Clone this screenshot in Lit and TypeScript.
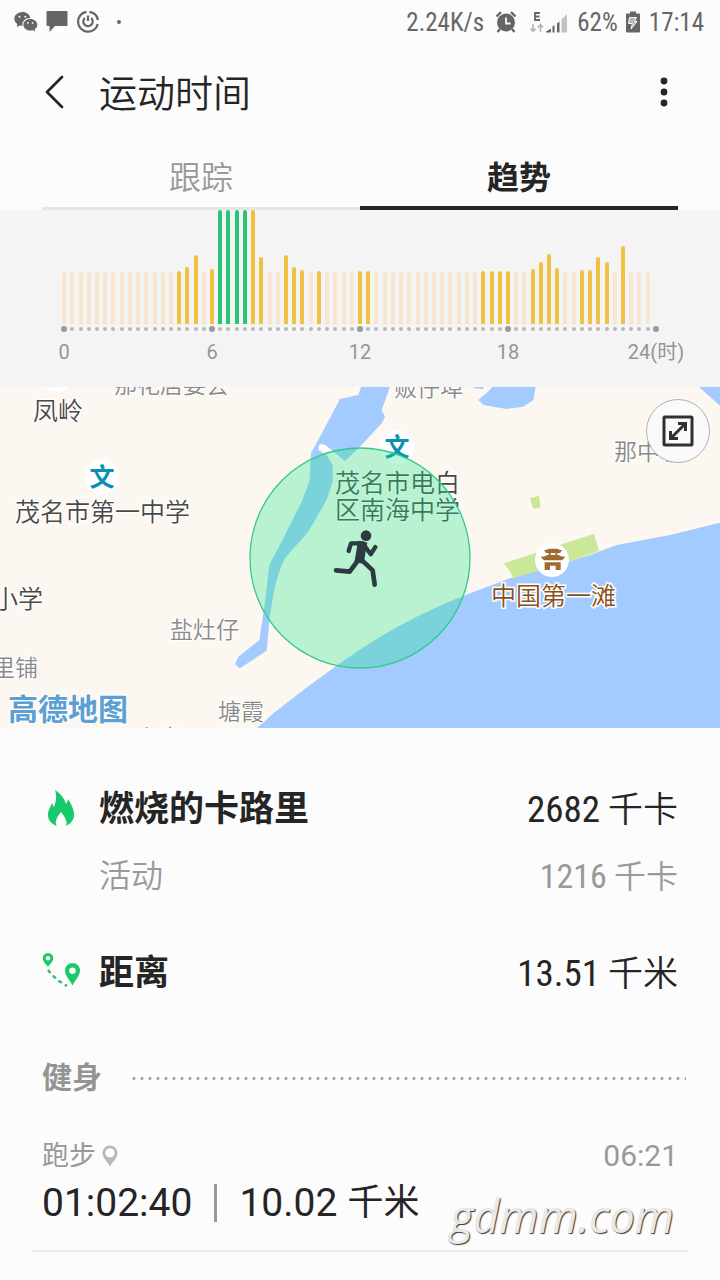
import { LitElement, html, svg, css } from "lit";
import { customElement } from "lit/decorators.js";
import { classMap } from "lit/directives/class-map.js";
import { styleMap } from "lit/directives/style-map.js";

const REST = 52;
const SLOTS_PER_HOUR = 3;
const SLOT_COUNT = 24 * SLOTS_PER_HOUR;

/** Active slots of the day: slot index -> bar height. */
const ACTIVE: Record<number, number> = {
  14: 53, 15: 57, 16: 69, 18: 55, 19: 114, 20: 114, 21: 114, 22: 114, 23: 114,
  24: 67, 27: 69, 28: 57, 29: 54, 31: 53, 36: 53, 37: 53, 51: 53, 52: 53,
  53: 53, 54: 53, 57: 55, 58: 62, 59: 70, 60: 56, 63: 54, 64: 54, 65: 67,
  66: 62, 68: 78,
};
const WORKOUT = new Set([19, 20, 21, 22]);

@customElement("status-bar")
export class StatusBar extends LitElement {
  static styles = css`
    :host {
      display: flex;
      align-items: center;
      justify-content: space-between;
      height: 46px;
      padding: 0 16px 0 14px;
      color: #666;
      font: 25px/30px "Roboto Condensed", Roboto, sans-serif;
    }
    .side { display: flex; align-items: center; }
    .notices { gap: 8px; }
    .last { margin-left: 3px; }
    .speed { margin-right: 11px; }
    .signal { margin: 0 8px 0 12px; }
    .battery { margin: 0 8px 0 7px; }
    svg { display: block; }
  `;
  render() {
    return html`
      <div class="side notices">
        <svg width="24" height="24" viewBox="0 0 24 24" fill="#666">
          <path d="M8.500 1C4 1 .3 4 .3 7.700c0 2.100 1.200 4 3 5.200L2.800 16l3-1.600c.9.200 1.700.300 2.700.300-.8-4.500 3-8 7.800-7.800C15.700 3.500 12.500 1 8.500 1z"/>
          <path d="M16.300 7.900c-4 0-6.900 2.500-6.900 5.800s3 5.800 6.900 5.800c.9 0 1.700-.100 2.400-.300l2.500 1.300-.6-2.200c1.600-1 2.700-2.700 2.700-4.600 0-3.300-3.100-5.800-7-5.800z"/>
          <g fill="#fcfcfc"><circle cx="5.500" cy="5.800" r="1"/><circle cx="11.300" cy="5.800" r="1"/><circle cx="13.800" cy="11.900" r=".9"/><circle cx="18.600" cy="11.900" r=".9"/></g>
        </svg>
        <svg width="22" height="24" viewBox="0 0 22 24" fill="#666">
          <path d="M1.500 0h19a1 1 0 0 1 1 1v13a1 1 0 0 1-1 1H9l-5.500 6V15h-2a1 1 0 0 1-1-1V1a1 1 0 0 1 1-1z"/>
        </svg>
        <svg width="24" height="24" viewBox="0 0 24 24" fill="none" stroke="#666" stroke-width="2.200">
          <path d="M13.500 .8A10 10 0 0 1 21.900 9M21.800 13A10 10 0 1 1 10.500 .8"/>
          <path d="M8.800 7a4.700 4.700 0 1 0 6.400 0M12 4.500v5.500"/>
        </svg>
        <svg class="last" width="12" height="24" viewBox="0 0 12 24" fill="#666"><circle cx="8" cy="11" r="2"/></svg>
      </div>
      <div class="side">
        <span class="speed">2.24K/s</span>
        <svg width="22" height="24" viewBox="0 0 22 24">
          <circle cx="11" cy="11.500" r="9" fill="#666"/>
          <path d="M1.500 5.500 6 1.200M20.500 5.500 16 1.200M5 18l-2.500 3M17 18l2.500 3" stroke="#666" stroke-width="2.400" fill="none"/>
          <path d="M11 6.500v6h4.500" stroke="#fcfcfc" stroke-width="1.800" fill="none"/>
        </svg>
        <svg class="signal" width="40" height="24" viewBox="0 0 40 24">
          <path d="M11 2H6v7h5M6 5.500h4.500" fill="none" stroke="#666" stroke-width="1.800"/>
          <path d="M4 13v7M1.500 17.500 4 20.500l2.500-3M11.500 21v-7M9 16.500l2.500-3 2.500 3" fill="none" stroke="#b5b5b5" stroke-width="1.600"/>
          <path d="M17 21.500v-1l5-3v4zM23.500 15.500l2-1.500v7.500h-2zM28 12.500l2.500-2v11H28z" fill="#666"/>
          <path d="M32.500 8.500 38 3v18.500h-5.500z" fill="#c2c2c2"/>
        </svg>
        <span>62%</span>
        <svg class="battery" width="16" height="24" viewBox="0 0 16 24">
          <path d="M5 .5h6v2h3a1 1 0 0 1 1 1v17a1 1 0 0 1-1 1H2a1 1 0 0 1-1-1v-17a1 1 0 0 1 1-1h3z" fill="#666"/>
          <path d="M4.500 6.500h7l-2 4h2.500L6 18l1.500-5.500h-4z" fill="#b5b5b5" stroke="#fcfcfc" stroke-width="1"/>
        </svg>
        <span>17:14</span>
      </div>`;
  }
}

@customElement("activity-chart")
export class ActivityChart extends LitElement {
  static styles = css`
    :host {
      display: block;
      height: 177px;
      box-sizing: border-box;
      padding: 0 60px;
      background: #f4f4f4;
      color: #949494;
      font: 20px/26px Roboto, "Noto Sans CJK SC", sans-serif;
    }
    .bars, .dots, .hours { display: grid; }
    .bars {
      grid-template-columns: repeat(73, 1fr);
      height: 114px;
      align-items: end;
      justify-items: center;
    }
    .bar { width: 4px; border-radius: 2px 2px 0 0; background: #f8e6d0; }
    .active { background: #f1c142; }
    .workout { background: #2ac574; }
    .dots {
      grid-template-columns: repeat(73, 1fr);
      height: 10px;
      align-items: center;
      justify-items: center;
    }
    .dot { width: 4px; height: 4px; border-radius: 50%; background: #b8b8b8; }
    .major { width: 6px; height: 6px; background: #999; }
    .hours {
      grid-template-columns: repeat(5, 1fr);
      margin: 5px -70px 0;
      text-align: center;
    }
  `;
  render() {
    const slots = Array.from({ length: SLOT_COUNT }, (_, i) => i);
    const ticks = Array.from({ length: SLOT_COUNT + 1 }, (_, i) => i);
    return html`
      <div class="bars">
        ${slots.map((i) => html`<div
          class=${classMap({ bar: true, active: i in ACTIVE, workout: WORKOUT.has(i) })}
          style=${styleMap({ height: `${ACTIVE[i] ?? REST}px` })}></div>`)}
      </div>
      <div class="dots">
        ${ticks.map((i) => html`<div class=${classMap({ dot: true, major: i % 18 === 0 })}></div>`)}
      </div>
      <div class="hours">
        <span>0</span><span>6</span><span>12</span><span>18</span><span>24(时)</span>
      </div>`;
  }
}

const school = (x: number, y: number) => svg`
  <circle cx=${x} cy=${y} r="17" fill="#fff"/>
  <text class="school" x=${x} y=${y + 9}>文</text>`;

@customElement("route-map")
export class RouteMap extends LitElement {
  static styles = css`
    :host { display: block; position: relative; height: 341px; overflow: hidden; background: #fcf8f1; }
    .canvas { display: block; width: 100%; height: 100%; }
    text {
      font-family: "Noto Sans CJK SC", sans-serif;
      font-size: 25px;
      font-weight: 350;
      fill: #484848;
      stroke: #fff;
      stroke-width: 2px;
      paint-order: stroke;
    }
    .village { font-size: 23px; fill: #8a8a8a; }
    .school { fill: #0a90b0; font-weight: 700; stroke: none; text-anchor: middle; }
    .sight { fill: #8b4f18; stroke-width: 3px; }
    .brand { font-size: 30px; font-weight: 700; fill: #5b9fd4; }
    .expand {
      position: absolute;
      top: 12px;
      right: 10px;
      width: 64px;
      height: 64px;
      padding: 0;
      border: 1px solid #b0b0b0;
      border-radius: 50%;
      background: #fafafa;
      display: grid;
      place-items: center;
    }
  `;
  render() {
    return html`
      <svg class="canvas" viewBox="0 0 720 341" preserveAspectRatio="xMidYMid slice">
        <g transform="translate(230 -2) scale(.33333)" fill="#a3cbff">
          <path d="M395 0 385 30 330 42 270 155 243 205 238 290 215 350 160 460 118 540 105 650 88 765 25 815 15 838 30 850 110 797 120 690 130 630Q140 570 165 520L235 440 290 345 308 290V240L290 210 265 195 268 180 285 180 345 228 395 180 455 115 465 95 455 75 482 0z"/>
          <path d="M75 1035 130 985 240 900 330 835Q440 755 560 695 640 655 720 625L840 580 930 555 1080 510 1160 480 1320 450 1470 413V1035z"/>
          <path d="M745 45 780 15 790 0H918L910 45 880 65 830 72 760 60zM1400 0H1470V62zM715 0H760V12L735 10z"/>
          <path d="M265 185Q270 172 285 181L330 218 300 205z" fill="#fff"/>
          <path d="M822 535 1092 446 1107 498 1030 525 850 580 840 560zM900 340 927 332 932 367 910 372z" fill="#cbe898"/>
        </g>
        <circle cx="57" cy="-12" r="17" fill="#fff"/>
        <text class="village" x="114" y="6">那花居委会</text>
        <text class="village" x="394" y="9">贩仔埠</text>
        <text x="33" y="33">凤岭</text>
        ${school(102, 90)}
        <text x="15" y="134">茂名市第一中学</text>
        ${school(397, 60)}
        <text x="335" y="105">茂名市电白</text>
        <text x="335" y="132">区南海中学</text>
        <text class="village" x="614" y="73">那中坡</text>
        <text x="-7" y="221">小学</text>
        <text class="village" x="170" y="251">盐灶仔</text>
        <text class="village" x="-8" y="289">里铺</text>
        <text class="village" x="218" y="333">塘霞</text>
        <text class="village" x="136" y="359">上寮</text>
        <circle cx="552" cy="173" r="17" fill="#fff"/>
        <g transform="translate(470 -2) scale(.33333)" fill="#a06a35">
          <path d="M222 496Q232 495 236 491H262Q266 495 276 496L270 504H228zM236 504H242V512H236zM256 504H262V512H256zM212 516Q228 514 232 510H266Q270 514 286 516L276 526H222zM224 532H272V555H257V542H240V555H224z"/>
        </g>
        <text class="sight" x="491" y="218">中国第一滩</text>
        <text class="brand" x="8" y="333">高德地图</text>
        <circle cx="360" cy="171" r="110" fill="#1fe685" fill-opacity=".3" stroke="#35c988" stroke-width="1.300"/>
        <g transform="translate(230 -2) scale(.33333)" fill="none" stroke="#2c3b42" stroke-linecap="round" stroke-linejoin="round">
          <circle cx="408" cy="452" r="16" fill="#2c3b42" stroke="none"/>
          <path stroke-width="13" d="M356 498 363 475H398L422 508 436 486"/>
          <path stroke-width="28" stroke-linecap="butt" d="M398 470 387 534"/>
          <path stroke-width="14" d="M384 526 359 560 318 556M394 524 428 556 434 599"/>
        </g>
      </svg>
      <button class="expand" aria-label="展开地图">
        <svg width="32" height="32" viewBox="0 0 32 32" fill="none" stroke="#303030" stroke-width="3">
          <rect x="2" y="2" width="28" height="28" rx="1"/>
          <path stroke-width="3" d="M8.500 23.500 23.500 8.500M16 8.500h7.500V16M8.500 16v7.500H16"/>
        </svg>
      </button>`;
  }
}

@customElement("app-root")
export class AppRoot extends LitElement {
  static styles = css`
    :host {
      display: block;
      min-height: 100vh;
      background: #fcfcfc;
      color: #252525;
      font-family: Roboto, "Noto Sans CJK SC", sans-serif;
    }
    button { border: 0; background: none; padding: 0; color: inherit; font: inherit; }
    svg { display: block; }
    .header { display: flex; align-items: center; height: 92px; padding: 0 42px; }
    .back { width: 57px; }
    .title { flex: 1; margin: 0; padding-top: 4px; font-size: 38px; line-height: 48px; font-weight: 350; }
    .more { width: 28px; display: grid; justify-items: center; }
    .tabs { display: grid; grid-template-columns: 1fr 1fr; height: 72px; margin: 0 42px; }
    .tab { font-size: 32px; line-height: 40px; font-weight: 350; color: #999; padding-top: 11px; border-bottom: 3px solid #e6e6e6; }
    .selected { color: #252525; font-weight: 700; border-bottom: 4px solid #252525; }
    .stats { padding: 56px 42px 0; }
    .row { display: flex; align-items: center; height: 52px; font-size: 35px; line-height: 52px; }
    .icon { width: 57px; margin-bottom: 4px; }
    .name { flex: 1; font-weight: 700; }
    .value { font-family: "Roboto Condensed", Roboto, "Noto Sans CJK SC", sans-serif; font-weight: 350; }
    .number { font-size: 37px; font-weight: 400; }
    .sub { margin-top: 14px; padding-left: 57px; font-size: 32px; color: #999; }
    .sub .name { font-weight: 350; }
    .sub .number { font-size: 34px; }
    .distance { margin-top: 46px; }
    .section { display: flex; align-items: center; gap: 28px; margin: 58px 34px 0 42px; }
    .heading { margin: 0; font-size: 30px; line-height: 40px; font-weight: 700; color: #949494; }
    .rule {
      flex: 1;
      height: 3px;
      background: radial-gradient(circle, #a0a0a0 1px, transparent 2px) 0 0 / 8px 3px;
    }
    .entry { position: relative; margin: 34px 32px 0; padding: 4px 10px 20px; border-bottom: 2px solid #ececec; }
    .meta { display: flex; align-items: center; font-size: 27px; line-height: 40px; color: #999; }
    .pin { margin-left: 6px; }
    .time { margin-left: auto; font-size: 30px; }
    .result { display: flex; align-items: center; font-size: 39px; line-height: 54px; }
    .bar { width: 3px; height: 38px; margin: 0 22px; background: #999; }
    .unit { margin-left: 10px; font-size: 36px; }
    .watermark {
      position: absolute;
      right: 14px;
      bottom: 4px;
      font: italic 45px/60px "Open Sans", sans-serif;
      color: #e8e8e8;
      text-shadow: 1px 1px 1px #333;
    }
  `;
  render() {
    return html`
      <status-bar></status-bar>
      <header class="header">
        <button class="back" aria-label="返回">
          <svg width="24" height="36" viewBox="0 0 24 36" fill="none" stroke="#252525" stroke-width="2.800" stroke-linecap="round" stroke-linejoin="round">
            <path d="M20 3 5 18l15 15"/>
          </svg>
        </button>
        <h1 class="title">运动时间</h1>
        <button class="more" aria-label="更多选项">
          <svg width="8" height="30" viewBox="0 0 8 30" fill="#252525">
            <circle cx="4" cy="4" r="3.400"/><circle cx="4" cy="15" r="3.400"/><circle cx="4" cy="26" r="3.400"/>
          </svg>
        </button>
      </header>
      <nav class="tabs">
        <button class="tab">跟踪</button>
        <button class="tab selected">趋势</button>
      </nav>
      <activity-chart></activity-chart>
      <route-map></route-map>
      <section class="stats">
        <div class="row">
          <svg class="icon" width="57" height="38" viewBox="0 0 57 38">
            <path fill="#17cb6d" d="M13 1c6 4 9 8 11 14 1-2 2-3 2-5 4 6 7 13 6 18-1 4-4 7-8 9 2-4-1-9-5-14-4 5-7 10-4 14-5-2-9-5-9-11 0-5 2-7 4-12 1 2 1 3 2 4 2-5 3-11 1-17z"/>
          </svg>
          <span class="name">燃烧的卡路里</span><span class="value"><span class="number">2682</span> 千卡</span>
        </div>
        <div class="row sub"><span class="name">活动</span><span class="value"><span class="number">1216</span> 千卡</span></div>
        <div class="row distance">
          <svg class="icon" width="57" height="38" viewBox="0 0 57 38">
            <g fill="#17cb6d" fill-rule="evenodd">
              <path d="M6 0a5.300 5.300 0 0 0-5.300 5.300C.7 8.500 4 11 6 14c2-3 5.300-5.500 5.300-8.700A5.300 5.300 0 0 0 6 0zm0 3a2.300 2.300 0 1 1 0 4.600A2.300 2.300 0 0 1 6 3z"/>
              <path d="M30.500 10a7.500 7.500 0 0 0-7.500 7.800c0 5 5 9.700 7.500 14.700 2.500-5 7.500-9.700 7.500-14.700a7.500 7.500 0 0 0-7.500-7.800zm0 4.500a3.300 3.300 0 1 1 0 6.600 3.300 3.300 0 0 1 0-6.600z"/>
            </g>
            <path d="M6 17 10 22 17 28 25 33" fill="none" stroke="#2db873" stroke-width="2.400" stroke-dasharray="4 3.500"/>
          </svg>
          <span class="name">距离</span><span class="value"><span class="number">13.51</span> 千米</span>
        </div>
      </section>
      <div class="section"><h2 class="heading">健身</h2><div class="rule"></div></div>
      <article class="entry">
        <div class="meta">
          <span>跑步</span>
          <svg class="pin" width="16" height="22" viewBox="0 0 16 22" fill="#b8b8b8" fill-rule="evenodd">
            <path d="M8 .5A7.500 7.500 0 0 0 .5 8c0 5 5 8.500 7.500 13.500C10.500 16.500 15.500 13 15.500 8A7.500 7.500 0 0 0 8 .5zm0 2.700a4.700 4.700 0 1 1 0 9.400 4.700 4.700 0 0 1 0-9.400z"/>
          </svg>
          <span class="time">06:21</span>
        </div>
        <div class="result">
          <span>01:02:40</span><span class="bar"></span><span>10.02</span><span class="unit">千米</span>
        </div>
        <div class="watermark">gdmm.com</div>
      </article>`;
  }
}
